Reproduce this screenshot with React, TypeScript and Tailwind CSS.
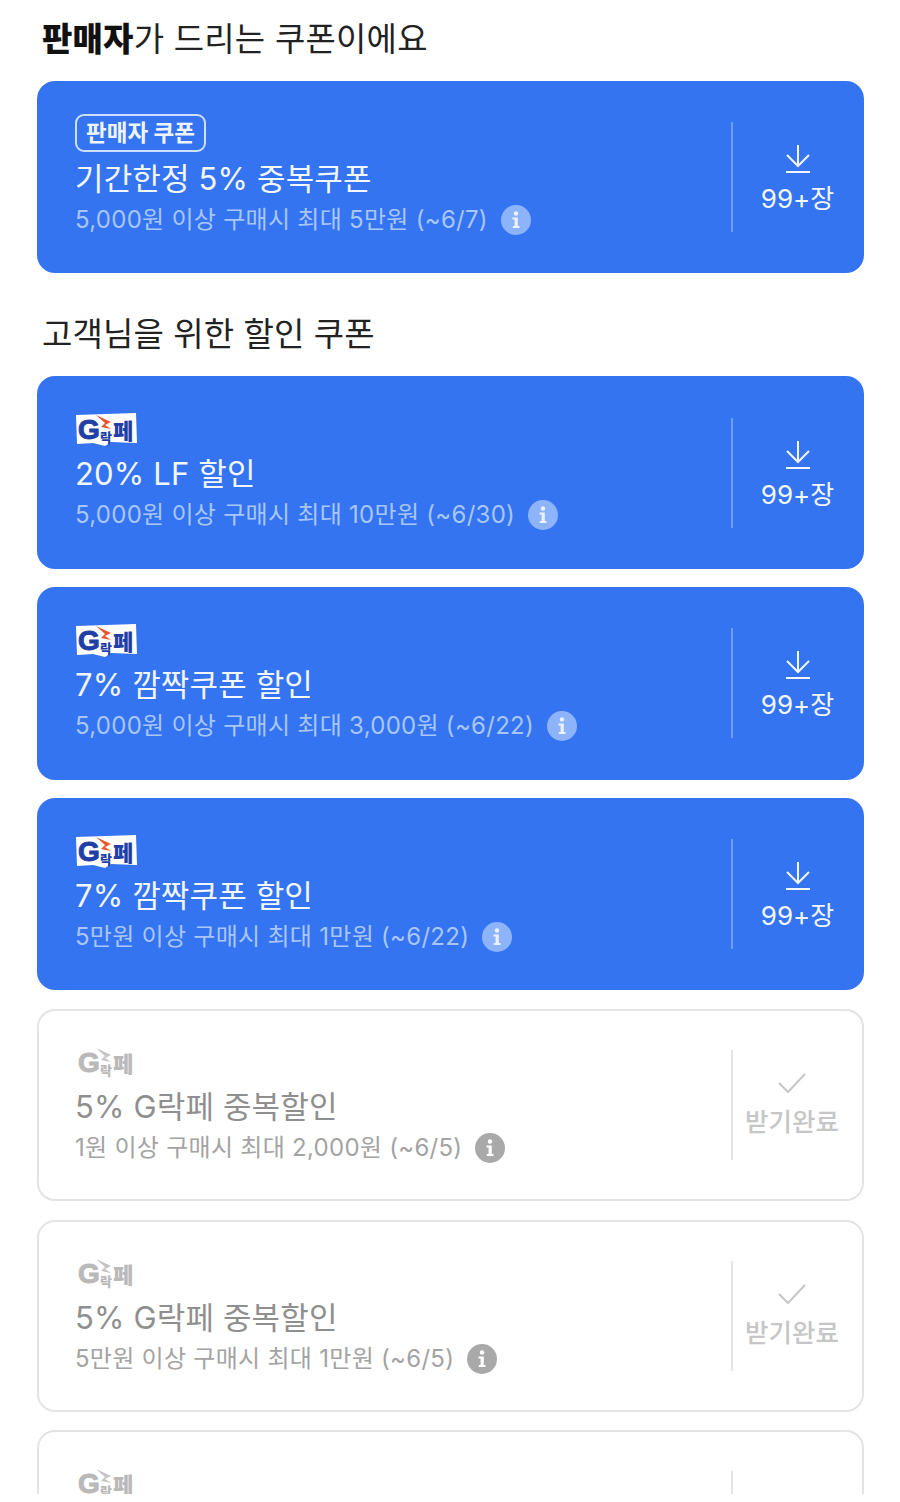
const KR = "font-['Inter','Noto_Sans_CJK_KR','Noto_Sans',sans-serif]";

type Coupon = { logo: "seller" | "g"; title: string; sub: string; off?: boolean };

const top: Coupon[] = [
  { logo: "seller", title: "기간한정 5% 중복쿠폰", sub: "5,000원 이상 구매시 최대 5만원 (~6/7)" },
];
const rest: Coupon[] = [
  { logo: "g", title: "20% LF 할인", sub: "5,000원 이상 구매시 최대 10만원 (~6/30)" },
  { logo: "g", title: "7% 깜짝쿠폰 할인", sub: "5,000원 이상 구매시 최대 3,000원 (~6/22)" },
  { logo: "g", title: "7% 깜짝쿠폰 할인", sub: "5만원 이상 구매시 최대 1만원 (~6/22)" },
  { logo: "g", title: "5% G락페 중복할인", sub: "1원 이상 구매시 최대 2,000원 (~6/5)", off: true },
  { logo: "g", title: "5% G락페 중복할인", sub: "5만원 이상 구매시 최대 1만원 (~6/5)", off: true },
  { logo: "g", title: "", sub: "", off: true },
];

function GLogo({ off }: { off?: boolean }) {
  const ink = off ? "#b9b9b9" : "#1f3fa6";
  return (
    <svg width="64" height="36" viewBox="0 0 64 36" className="block">
      {!off && <path d="M1 3 L61 1 L62 31 L36 30 L30 34 L18 31 L2 32 Z" fill="#ffffff" />}
      <text x="3" y="27" fontSize="28" fontWeight="900" fill={ink} stroke={ink} strokeWidth="1" fontFamily="Liberation Sans, sans-serif">G</text>
      <path d="M21 3 L36 10 L30 13 L36 17 L26 15 L30 11 Z" fill={off ? "#c4c4c4" : "#e8562f"} />
      <text x="25" y="30" fontSize="13" fontWeight="900" fill={ink} fontFamily="Noto Sans CJK KR, sans-serif">락</text>
      <text x="38" y="27" fontSize="22" fontWeight="900" fill={ink} fontFamily="Noto Sans CJK KR, sans-serif">페</text>
    </svg>
  );
}

function InfoIcon({ off }: { off?: boolean }) {
  return (
    <svg width="30" height="30" viewBox="0 0 30 30" className="shrink-0">
      <circle cx="15" cy="15" r="15" fill={off ? "#a9a9a9" : "#8db4fb"} />
      <circle cx="15" cy="8.5" r="2.2" fill={off ? "#ffffff" : "#eaf1ff"} />
      <path d="M11.5 12.5 H16.8 V21 H18.5 V23 H11.8 V21 H13.6 V14.5 H11.5 Z" fill={off ? "#ffffff" : "#eaf1ff"} />
    </svg>
  );
}

function Card({ c }: { c: Coupon }) {
  const off = c.off;
  return (
    <div
      className={`flex h-[192.4px] w-[827px] shrink-0 rounded-[18px] ${
        off ? "border-2 border-[#e4e4e4] bg-white" : "bg-[#3574f0]"
      }`}
    >
      <div className={`flex min-w-0 flex-1 flex-col ${off ? "pl-[36px]" : "pl-[38px]"}`}>
        {c.logo === "seller" ? (
          <div className="mt-[33px] h-[39px]">
            <div className="flex h-[38px] w-[131px] items-center justify-center rounded-[9px] border-2 border-[#cfe0ff] text-[22.5px] leading-none font-bold text-[#eef4ff]">
              판매자 쿠폰
            </div>
          </div>
        ) : (
          <div className={`h-[36px] ${off ? "mt-[34px]" : "mt-[36px]"}`}>
            <GLogo off={off} />
          </div>
        )}
        {c.title && (
          <>
            <div className={`mt-[6px] text-[31px] leading-[40px] tracking-[0.15px] ${off ? "text-[#8f8f8f]" : "text-[#f2f6ff]"}`}>
              {c.title}
            </div>
            <div className={`flex h-[42px] items-center gap-[13px] text-[24px] tracking-[0.28px] ${off ? "text-[#a3a3a3]" : "text-[#a9c6fb]"}`}>
              <span>{c.sub}</span>
              <InfoIcon off={off} />
            </div>
          </>
        )}
      </div>
      <div className={`my-auto h-[110px] w-[2px] shrink-0 ${off ? "bg-[#e4e4e4]" : "bg-[#6f9cf6]"}`} />
      <div className={`flex shrink-0 flex-col items-center justify-center ${off ? "w-[129px] pr-[11px]" : "w-[131px] pr-[2px] pt-[6px]"}`}>
        {off ? (
          <>
            <svg width="30" height="24" viewBox="0 0 30 24" fill="none" stroke="#c6c6c6" strokeWidth="2">
              <path d="M2 12 L11 21 L28 3" />
            </svg>
            <div className="mt-[10px] text-[25.5px] leading-[34px] font-medium whitespace-nowrap text-[#c6c6c6]">받기완료</div>
          </>
        ) : (
          <>
            <svg width="26" height="30" viewBox="0 0 26 30" fill="none" stroke="#f2f6ff" strokeWidth="2">
              <path d="M13 1 V21 M2 11 L13 22 L24 11 M1 28 H25" />
            </svg>
            <div className="mt-[8px] text-[26px] leading-[34px] text-[#f2f6ff]">99+장</div>
          </>
        )}
      </div>
    </div>
  );
}

export default function App() {
  return (
    <div className={`${KR} h-[1502px] w-[900px] bg-white`}>
      <div className="h-[1494px] overflow-hidden">
        <h2 className="ml-[42px] flex h-[81px] items-center pb-[2px] text-[33px] font-normal tracking-[0.2px] text-[#222222]">
          <b className="font-black text-[#111111]">판매자</b>가 드리는 쿠폰이에요
        </h2>
        <div className="ml-[37px] flex flex-col">
          {top.map((c) => (
            <Card key={c.title} c={c} />
          ))}
        </div>
        <h2 className="ml-[42px] flex h-[103px] items-center pt-[20px] text-[33px] font-normal tracking-[0.1px] text-[#222222]">
          고객님을 위한 할인 쿠폰
        </h2>
        <div className="ml-[37px] flex flex-col gap-[18.4px]">
          {rest.map((c, i) => (
            <Card key={i} c={c} />
          ))}
        </div>
      </div>
    </div>
  );
}
